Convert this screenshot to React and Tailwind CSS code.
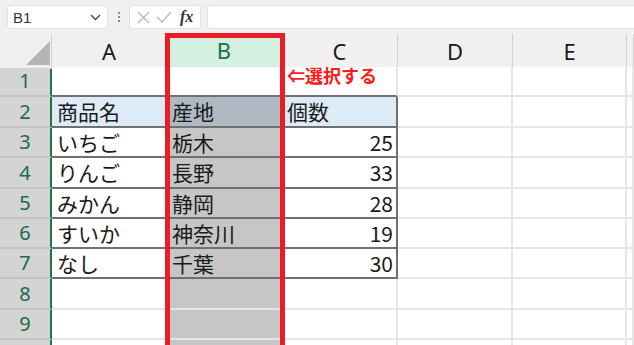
import React from "react";

const rows = [
  ["", "", ""],
  ["商品名", "産地", "個数"],
  ["いちご", "栃木", "25"],
  ["りんご", "長野", "33"],
  ["みかん", "静岡", "28"],
  ["すいか", "神奈川", "19"],
  ["なし", "千葉", "30"],
  ["", "", ""],
  ["", "", ""],
  ["", "", ""],
];
const heights = [30, 31, 30, 31, 30, 30, 30, 31, 30, 30];

function cellClass(r, c) {
  const inTable = r >= 1 && r <= 6 && c <= 2;
  let bg = "bg-white";
  if (c === 1 && r >= 1) bg = r === 1 ? "bg-[#aeb9c4]" : "bg-[#c6c6c6]";
  else if (r === 1 && (c === 0 || c === 2)) bg = "bg-[#ddebf7]";
  const bottomDark = r <= 6 && c <= 2;
  const rightNum = c === 2 && r >= 2 && r <= 6;
  return [
    "flex items-center overflow-hidden whitespace-nowrap",
    bg,
    bottomDark ? "border-b-2 border-b-[#707070]" : "border-b-2 border-b-[#e6e6e6]",
    inTable ? "border-r-2 border-r-[#707070]" : "border-r-2 border-r-[#e6e6e6]",
    rightNum ? "justify-end pr-[3px]" : "pl-[5px]",
  ].join(" ");
}

export default function App() {
  const font = { fontFamily: '"Noto Sans CJK JP", "Noto Sans", sans-serif' };
  return (
    <div className="relative w-[634px] h-[345px] overflow-hidden bg-[#f0f0f0] text-[#1a1a1a]" style={font}>
      {/* formula bar */}
      <div className="flex h-[34px] items-start pt-[5px] pl-[7px]">
        <div className="flex h-[24px] w-[101px] items-center justify-between rounded-[4px] border border-[#e3e3e3] bg-white pl-[5px] pr-[6px]">
          <span className="text-[15px] leading-none text-[#333]" style={{ fontFamily: '"Liberation Sans", sans-serif' }}>B1</span>
          <svg width="11" height="7" viewBox="0 0 11 7">
            <path d="M1 1 L5.5 5.5 L10 1" fill="none" stroke="#444" strokeWidth="1.4" />
          </svg>
        </div>
        <div className="flex h-[24px] w-[21px] flex-col items-center justify-center gap-[2px]">
          <div className="h-[2px] w-[2px] bg-[#8a8a8a]" />
          <div className="h-[2px] w-[2px] bg-[#8a8a8a]" />
          <div className="h-[2px] w-[2px] bg-[#8a8a8a]" />
        </div>
        <div className="flex h-[24px] w-[72px] items-center gap-[6px] rounded-[4px] border border-[#e3e3e3] bg-white pl-[7px]">
          <svg width="13" height="13" viewBox="0 0 13 13">
            <path d="M1 1 L12 12 M12 1 L1 12" stroke="#b8b8b8" strokeWidth="1.3" fill="none" />
          </svg>
          <svg width="16" height="12" viewBox="0 0 16 12">
            <path d="M1 6 L6 11 L15 1" stroke="#b8b8b8" strokeWidth="1.3" fill="none" />
          </svg>
          <span className="ml-[2px] text-[16px] font-bold italic leading-none text-[#333]" style={{ fontFamily: '"Liberation Serif", serif' }}>fx</span>
        </div>
        <div className="ml-[6px] h-[24px] flex-1 rounded-l-[4px] border border-r-0 border-[#e3e3e3] bg-white" />
      </div>

      {/* header row */}
      <div className="grid h-[33px] grid-cols-[52px_115px_115px_116px_115px_114px_1fr]">
        <div className="relative border-b border-r border-[#d0d0d0] bg-[#f0f0f0]">
          <svg className="absolute left-[26px] top-[7px]" width="24" height="24" viewBox="0 0 24 24">
            <path d="M24 0 L24 24 L0 24 Z" fill="#b5b5b5" />
          </svg>
        </div>
        {["A", "B", "C", "D", "E", "F"].map((l, i) =>
          i === 1 ? (
            <div key={l} className="flex items-center justify-center border-b-2 border-r border-b-[#217346] border-r-[#d0d0d0] bg-[#d3f0e0] text-[22px] text-[#217346]" style={{ fontFamily: '"Noto Sans", sans-serif' }}>
              {l}
            </div>
          ) : (
            <div key={l} className="flex items-center justify-center border-b border-r border-[#d0d0d0] bg-[#f0f0f0] text-[22px] text-[#1a1a1a]" style={{ fontFamily: '"Noto Sans", sans-serif' }}>
              {i < 5 ? l : ""}
            </div>
          )
        )}
      </div>

      {/* body */}
      {rows.map((row, r) => (
        <div key={r} className="grid grid-cols-[52px_115px_115px_116px_115px_114px_1fr]" style={{ height: heights[r] }}>
          <div className="flex items-center justify-center border-b-2 border-r-2 border-b-[#c4c4c4] border-r-[#217346] bg-[#d4d4d4] text-[20px] leading-none text-[#1f6b45]" style={{ fontFamily: '"Noto Sans", sans-serif' }}>
            {r < 9 ? r + 1 : ""}
          </div>
          {[0, 1, 2, 3, 4, 5].map((c) => (
            <div key={c} className={cellClass(r, c) + " text-[21px] leading-none"}>
              {c <= 2 ? row[c] : ""}
            </div>
          ))}
        </div>
      ))}

      {/* selection outline */}
      <div className="pointer-events-none absolute left-[165px] top-[33px] h-[330px] w-[120px] border-[5px] border-[#ed1c24]" />
      {/* annotation */}
      <div className="absolute left-[287px] top-[62px] text-[18px] font-bold leading-[26px] text-[#ff1a1a]">⇐選択する</div>
    </div>
  );
}
